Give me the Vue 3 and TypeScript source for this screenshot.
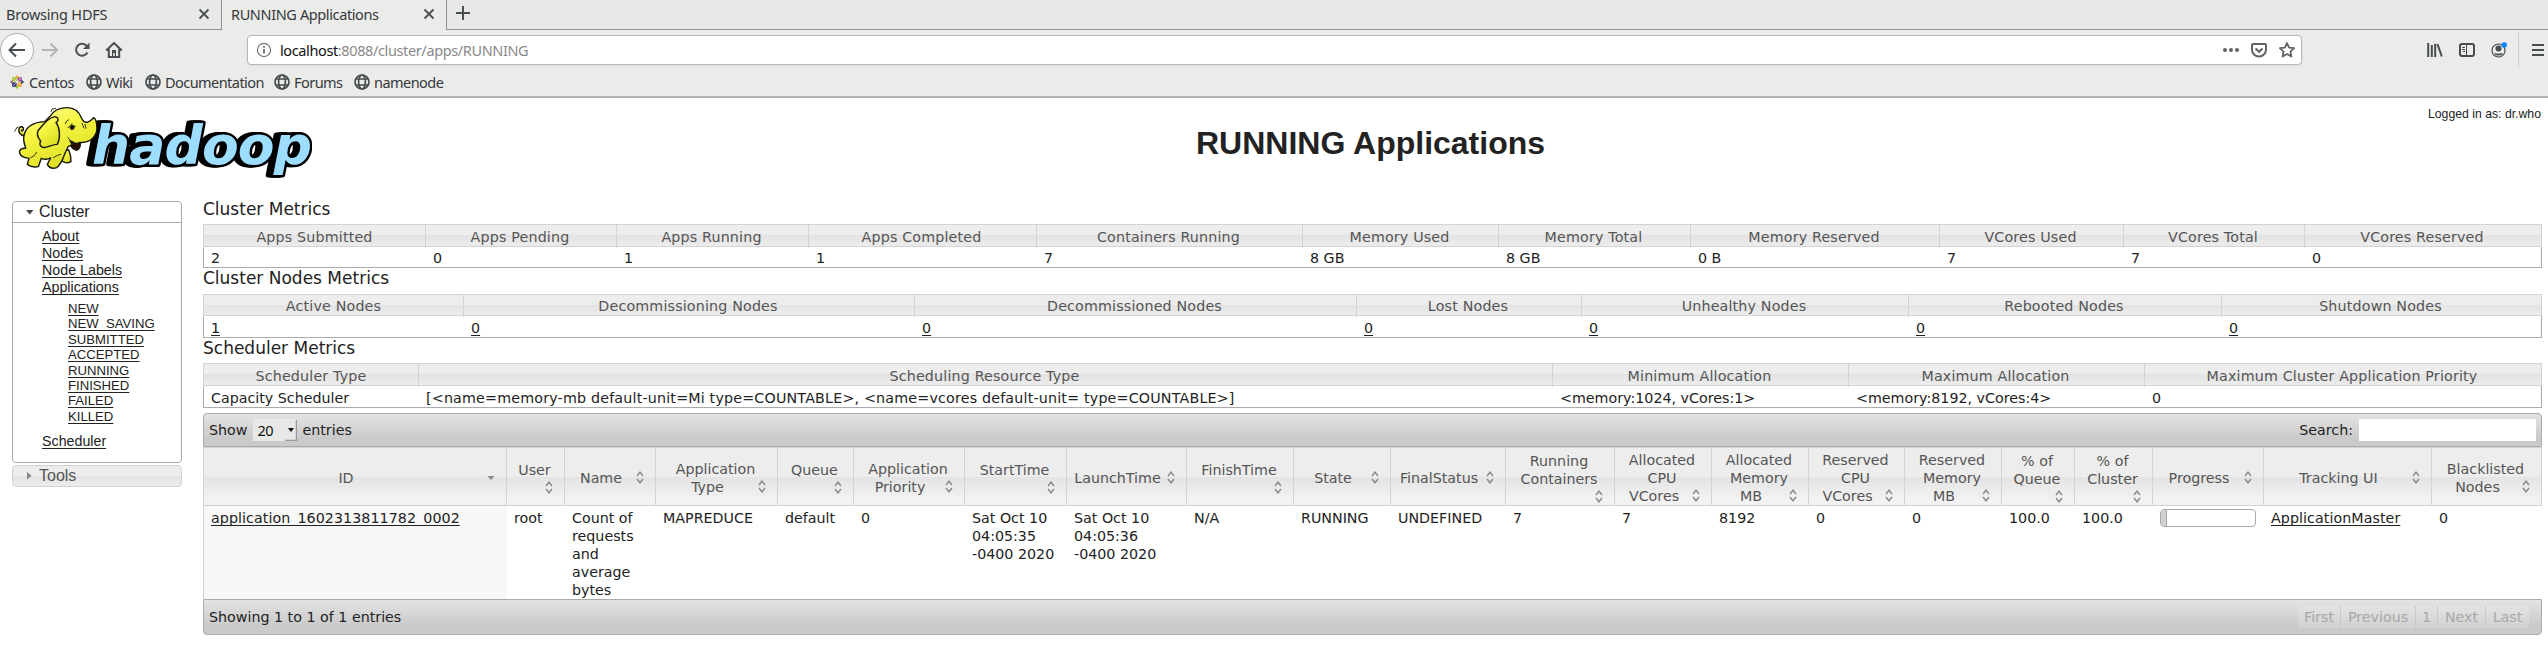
<script setup lang="ts">
interface Column { label: string; width: number; value: string; link?: boolean }
interface AppColumn { lines: string[]; width: number; value: string[]; kind?: 'link' | 'progress'; sorted?: boolean }

const bookmarks = [
  { name: 'Centos', width: 76 },
  { name: 'Wiki', width: 59 },
  { name: 'Documentation', width: 129 },
  { name: 'Forums', width: 80 },
  { name: 'namenode', width: 90 },
]

const links = ['About', 'Nodes', 'Node Labels', 'Applications']
const states = ['NEW', 'NEW_SAVING', 'SUBMITTED', 'ACCEPTED', 'RUNNING', 'FINISHED', 'FAILED', 'KILLED']

const metrics: { title: string; cls: string; columns: Column[] }[] = [
  {
    title: 'Cluster Metrics',
    cls: 'cluster',
    columns: [
      { label: 'Apps Submitted', width: 222, value: '2' },
      { label: 'Apps Pending', width: 191, value: '0' },
      { label: 'Apps Running', width: 192, value: '1' },
      { label: 'Apps Completed', width: 228, value: '1' },
      { label: 'Containers Running', width: 266, value: '7' },
      { label: 'Memory Used', width: 196, value: '8 GB' },
      { label: 'Memory Total', width: 192, value: '8 GB' },
      { label: 'Memory Reserved', width: 249, value: '0 B' },
      { label: 'VCores Used', width: 184, value: '7' },
      { label: 'VCores Total', width: 181, value: '7' },
      { label: 'VCores Reserved', width: 237, value: '0' },
    ],
  },
  {
    title: 'Cluster Nodes Metrics',
    cls: 'nodes',
    columns: [
      { label: 'Active Nodes', width: 260, value: '1', link: true },
      { label: 'Decommissioning Nodes', width: 451, value: '0', link: true },
      { label: 'Decommissioned Nodes', width: 442, value: '0', link: true },
      { label: 'Lost Nodes', width: 225, value: '0', link: true },
      { label: 'Unhealthy Nodes', width: 327, value: '0', link: true },
      { label: 'Rebooted Nodes', width: 313, value: '0', link: true },
      { label: 'Shutdown Nodes', width: 320, value: '0', link: true },
    ],
  },
  {
    title: 'Scheduler Metrics',
    cls: 'scheduler',
    columns: [
      { label: 'Scheduler Type', width: 215, value: 'Capacity Scheduler' },
      { label: 'Scheduling Resource Type', width: 1134, value: '[<name=memory-mb default-unit=Mi type=COUNTABLE>, <name=vcores default-unit= type=COUNTABLE>]' },
      { label: 'Minimum Allocation', width: 296, value: '<memory:1024, vCores:1>' },
      { label: 'Maximum Allocation', width: 296, value: '<memory:8192, vCores:4>' },
      { label: 'Maximum Cluster Application Priority', width: 397, value: '0' },
    ],
  },
]

const apps: AppColumn[] = [
  { lines: ['ID'], width: 303, value: ['application_1602313811782_0002'], kind: 'link', sorted: true },
  { lines: ['User', ''], width: 58, value: ['root'] },
  { lines: ['Name'], width: 91, value: ['Count of', 'requests', 'and', 'average', 'bytes'] },
  { lines: ['Application', 'Type'], width: 122, value: ['MAPREDUCE'] },
  { lines: ['Queue', ''], width: 76, value: ['default'] },
  { lines: ['Application', 'Priority'], width: 111, value: ['0'] },
  { lines: ['StartTime', ''], width: 102, value: ['Sat Oct 10', '04:05:35', '-0400 2020'] },
  { lines: ['LaunchTime'], width: 120, value: ['Sat Oct 10', '04:05:36', '-0400 2020'] },
  { lines: ['FinishTime', ''], width: 107, value: ['N/A'] },
  { lines: ['State'], width: 97, value: ['RUNNING'] },
  { lines: ['FinalStatus'], width: 115, value: ['UNDEFINED'] },
  { lines: ['Running', 'Containers', ''], width: 109, value: ['7'] },
  { lines: ['Allocated', 'CPU', 'VCores'], width: 97, value: ['7'] },
  { lines: ['Allocated', 'Memory', 'MB'], width: 97, value: ['8192'] },
  { lines: ['Reserved', 'CPU', 'VCores'], width: 96, value: ['0'] },
  { lines: ['Reserved', 'Memory', 'MB'], width: 97, value: ['0'] },
  { lines: ['% of', 'Queue', ''], width: 73, value: ['100.0'] },
  { lines: ['% of', 'Cluster', ''], width: 78, value: ['100.0'] },
  { lines: ['Progress'], width: 111, value: [], kind: 'progress' },
  { lines: ['Tracking UI'], width: 168, value: ['ApplicationMaster'], kind: 'link' },
  { lines: ['Blacklisted', 'Nodes'], width: 110, value: ['0'] },
]

const pages = [
  { t: 'First', w: 43 },
  { t: 'Previous', w: 75 },
  { t: '1', w: 22 },
  { t: 'Next', w: 48 },
  { t: 'Last', w: 43 },
]

const tracks = (cols: { width: number }[]) => cols.map((c) => c.width + 'px').join(' ')
</script>

<template>
  <div class="window">
    <div class="tabs">
      <div class="tab">
        <span class="ui-text">Browsing HDFS</span>
        <svg width="12" height="12" viewBox="0 0 12 12"><path d="M1.500 1.500l9 9M10.500 1.500l-9 9" /></svg>
      </div>
      <div class="tab active">
        <span class="ui-text">RUNNING Applications</span>
        <svg width="12" height="12" viewBox="0 0 12 12"><path d="M1.500 1.500l9 9M10.500 1.500l-9 9" /></svg>
      </div>
      <div class="tab-rest">
        <svg width="14" height="14" viewBox="0 0 14 14"><path d="M7 0v14M0 7h14" /></svg>
      </div>
    </div>

    <div class="nav">
      <div class="back">
        <svg width="18" height="16" viewBox="0 0 18 16"><path d="M17 8H2M8 1.500L1.500 8L8 14.500" /></svg>
      </div>
      <svg class="fwd" width="16" height="16" viewBox="0 0 16 16"><path d="M0 8h14.500M8.500 1.500L15 8l-6.500 6.500" /></svg>
      <svg class="reload" width="16" height="16" viewBox="0 0 16 16"><path d="M13 4.300A6 6 0 1 0 13.400 10.500" /><path class="solid" d="M15.500 0.500v6.500h-6.500z" /></svg>
      <svg class="home" width="18" height="16" viewBox="0 0 18 16"><path d="M1.200 8.400L9 1L16.800 8.400M3.800 7v8h10.400V7" /><path class="solid" d="M7 8h4v7h-1.200v-4h-1.600v4H7z" /></svg>
      <div class="url">
        <svg class="info" width="16" height="16" viewBox="0 0 16 16"><circle cx="8" cy="8" r="6.600" /><path class="mark" d="M8 7v4.500M8 4v1.800" /></svg>
        <span class="ui-text address"><b>localhost</b>:8088/cluster/apps/RUNNING</span>
        <div class="url-actions">
          <svg width="16" height="16" viewBox="0 0 16 16"><g class="fill"><circle cx="2" cy="8" r="2" /><circle cx="8" cy="8" r="2" /><circle cx="14" cy="8" r="2" /></g></svg>
          <svg width="16" height="16" viewBox="0 0 16 16"><path d="M2 2h12a1 1 0 0 1 1 1v4.500a7 7 0 0 1-14 0V3a1 1 0 0 1 1-1z" /><path d="M4.500 6.500L8 9.800l3.500-3.300" /></svg>
          <svg width="16" height="16" viewBox="0 0 16 16"><path class="star" d="M8 1l2.100 4.600 5 .6-3.700 3.400 1 4.900L8 12l-4.400 2.500 1-4.900L.9 6.200l5-.6z" /></svg>
        </div>
      </div>
      <div class="tools">
        <svg width="16" height="16" viewBox="0 0 16 16"><path d="M1.200 1v14M4.800 3v12M8.200 1.800v13.200" /><path d="M10.500 2.200l4.300 12.300" /></svg>
        <svg width="16" height="16" viewBox="0 0 16 16"><rect x="1" y="2" width="14" height="12" rx="2" /><path class="thin" d="M7.500 2v12M3 5.500h3M3 7.500h3M4 9.500h2" /></svg>
        <svg class="account" width="16" height="16" viewBox="0 0 16 16"><circle class="ring" cx="7.500" cy="8.500" r="6.500" /><circle class="solid" cx="7.500" cy="6.500" r="3" /><path class="solid" d="M3.500 11q4 1.500 8 0v1.200q-4 2.600-8 0z" /><circle class="dot" cx="13.200" cy="3" r="2.700" /></svg>
      </div>
      <svg class="menu" width="14" height="14" viewBox="0 0 14 14"><path d="M1 2h12M1 7h12M1 12h12" /></svg>
    </div>

    <div class="bookmarks">
      <div v-for="(b, i) in bookmarks" :key="b.name" class="bookmark" :style="{ width: b.width + 'px' }">
        <svg v-if="i === 0" class="centos" width="16" height="16" viewBox="0 0 16 16">
          <path fill="#9ccd2a" d="M2.500 2.500h5v5h-5z" /><path fill="#a14f8c" d="M8.500 2.500h5v5h-5z" /><path fill="#262577" d="M2.500 8.500h5v5h-5z" /><path fill="#efa724" d="M8.500 8.500h5v5h-5z" />
          <path fill="#efa724" d="M8 0l2.500 3h-5z" /><path fill="#262577" d="M16 8l-3 2.500v-5z" /><path fill="#9ccd2a" d="M8 16l-2.500-3h5z" /><path fill="#a14f8c" d="M0 8l3-2.500v5z" />
          <path stroke="#f4f0e6" stroke-width=".8" d="M3.500 3.500l9 9M12.500 3.500l-9 9" />
        </svg>
        <svg v-else class="globe" width="16" height="16" viewBox="0 0 16 16"><circle cx="8" cy="8" r="7" /><ellipse cx="8" cy="8" rx="3.400" ry="7" /><path d="M1.800 5h12.400M1.800 11h12.400" /></svg>
        <span class="ui-text">{{ b.name }}</span>
      </div>
    </div>

    <div class="page">
      <header class="head">
        <svg class="logo" width="312" height="80" viewBox="0 98 312 80">
          <defs>
            <linearGradient id="skin" x1="0" y1="0" x2=".5" y2="1"><stop offset="0" stop-color="#fbfb9a" /><stop offset=".45" stop-color="#f6f643" /><stop offset="1" stop-color="#dede26" /></linearGradient>
          </defs>
          <text class="word" x="92" y="163.500" textLength="220">hadoop</text>
          <g class="elephant" transform="translate(0 95) scale(.3333)">
            <path d="M78 122C62 124 54 112 57 101C61 92 72 94 70 104C69 109 65 109 64 105" />
            <path class="whisk" d="M44 109l6-10M50 99l5-3M153 50l4-9M159 42l8-2" />
            <path d="M178 172L186 198Q200 208 213 200Q214 184 206 164Z" />
            <path d="M134 80C98 82 74 98 71 128C70 145 76 152 77 160Q62 158 58 170Q60 188 87 190L82 208Q96 219 115 215L124 190Q138 196 152 189L142 208Q150 224 170 218Q184 206 192 182L204 155L217 150Q226 160 238 142C268 146 296 126 290 88Q288 72 281 68Q275 76 262 82Q251 84 245 70C237 48 220 37 198 38C176 39 160 48 150 64Z" />
            <path d="M165 65C140 70 130 90 114 107C108 122 116 130 122 138C116 150 124 160 136 157C150 154 160 148 172 148C182 128 180 98 168 82Q178 78 172 68Z" />
            <path class="mouth" d="M210 138Q224 148 241 144Q242 160 230 166Q216 162 213 152Q218 146 210 138Z" />
            <path class="crease" d="M196 86q2-10 10-12M204 98q8-12 22-4M214 92l2-6M246 85l6 14M255 88l3 12M262 84l-3-4M204 128q4 10 18 14M92 188q14-4 18-16M160 188q12-8 22-10" />
            <path class="eye" d="M208 98Q214 88 224 94Q224 106 214 105Z" />
          </g>
        </svg>
        <h1>RUNNING Applications</h1>
        <div class="login">Logged in as: dr.who</div>
      </header>

      <div class="columns">
        <aside>
          <div class="panel">
            <div class="panel-head"><svg width="8" height="5" viewBox="0 0 8 5"><path d="M0 0h7.500L3.750 4.500z" /></svg>Cluster</div>
            <ul class="links"><li v-for="l in links" :key="l"><a>{{ l }}</a></li></ul>
            <ul class="states"><li v-for="s in states" :key="s"><a>{{ s }}</a></li></ul>
            <div class="scheduler-link"><a>Scheduler</a></div>
          </div>
          <div class="panel-closed"><svg width="5" height="8" viewBox="0 0 5 8"><path d="M0 0v7.500L4.500 3.750z" /></svg>Tools</div>
        </aside>

        <main>
          <section v-for="m in metrics" :key="m.title" :class="m.cls">
            <h3>{{ m.title }}</h3>
            <div class="grid heads" :style="{ gridTemplateColumns: tracks(m.columns) }">
              <div v-for="c in m.columns" :key="c.label">{{ c.label }}</div>
            </div>
            <div class="grid cells" :style="{ gridTemplateColumns: tracks(m.columns) }">
              <div v-for="c in m.columns" :key="c.label" :class="{ resource: c.value.length > 40 }"><a v-if="c.link">{{ c.value }}</a><template v-else>{{ c.value }}</template></div>
            </div>
          </section>

          <div class="bar top">
            <span class="show">Show</span>
            <span class="select"><span class="ui-text">20</span><svg width="12" height="22" viewBox="0 0 12 22"><path d="M3 9h6l-3 4z" /><path class="shade" d="M0 21.500h11.500V1" /></svg></span>
            <span>entries</span>
            <span class="search">Search:</span><span class="field"></span>
          </div>
          <div class="grid app-heads" :style="{ gridTemplateColumns: tracks(apps) }">
            <div v-for="(c, ci) in apps" :key="ci" :class="{ alone: c.lines[c.lines.length - 1] === '' }">
              <div v-for="(l, i) in c.lines" :key="i" class="line" :class="{ tail: i === c.lines.length - 1 }">
                <span>{{ l }}</span>
                <svg v-if="i === c.lines.length - 1" width="16" height="16" viewBox="0 0 16 16">
                  <path v-if="c.sorted" class="solid" d="M4.500 6h7l-3.500 4z" />
                  <path v-else d="M5 6l3-3.800L11 6M5 9l3 3.800L11 9" />
                </svg>
              </div>
            </div>
          </div>
          <div class="grid app-cells" :style="{ gridTemplateColumns: tracks(apps) }">
            <div v-for="(c, ci) in apps" :key="ci" :class="{ sorted: c.sorted }">
              <div v-if="c.kind === 'progress'" class="progress"><i></i></div>
              <template v-for="v in c.value" v-else :key="v">
                <a v-if="c.kind === 'link'">{{ v }}</a>
                <div v-else>{{ v }}</div>
              </template>
            </div>
          </div>
          <div class="bar bottom">
            <span>Showing 1 to 1 of 1 entries</span>
            <div class="pages"><span v-for="p in pages" :key="p.t" :style="{ width: p.w + 'px' }">{{ p.t }}</span></div>
          </div>
        </main>
      </div>
    </div>
  </div>
</template>

<style>
body { margin: 0; background: #fff; }
</style>

<style scoped>
* { box-sizing: border-box; }
.window { width: 2548px; height: 648px; overflow: hidden; color: #222; font: 14.25px/18px "DejaVu Sans", sans-serif; }
svg { display: block; flex: none; fill: none; }
.ui-text { font: 14.5px/20px "Noto Sans", sans-serif; letter-spacing: -0.38px; color: #35393b; white-space: nowrap; }

.tabs { display: flex; height: 30px; background: #e8e8e7; }
.tab { display: flex; align-items: center; justify-content: space-between; width: 222px; padding: 0 11px 2px 6px; border-right: 1px solid #8e918f; border-bottom: 1px solid #8e918f; }
.tab:not(.active) .ui-text { letter-spacing: -0.22px; }
.tab.active { width: 225px; padding: 0 11px 3px 9px; border-bottom: 0; background: #ebebea; }
.tab svg path { stroke: #4a4f50; stroke-width: 1.8; }
.tab-rest { flex: 1; padding: 6px 0 0 9px; border-bottom: 1px solid #8e918f; }
.tab-rest path { stroke: #4a4f50; stroke-width: 2; }

.nav { display: flex; align-items: center; height: 40px; background: #ebebea; }
.nav svg path, .nav rect { stroke: #474d51; stroke-width: 2; }
.nav svg .solid { fill: #474d51; stroke: none; }
.back { display: flex; align-items: center; justify-content: center; width: 34px; height: 34px; border: 1px solid #b0b0ae; border-radius: 50%; background: #fdfdfd; }
.nav .fwd { margin-left: 8px; }
.nav .fwd path { stroke: #b3b5b5; }
.reload { margin-left: 16px; }
.home { margin-left: 15px; }
.url { display: flex; align-items: center; width: 2055px; height: 30px; margin-left: 124px; padding: 0 6px 0 8px; border: 1px solid #b7b7b5; border-radius: 4px; background: #fff; box-shadow: 0 1px 3px #0001; }
.info circle { stroke: #737373; stroke-width: 1.2; }
.nav .info .mark { stroke: #666; stroke-width: 1.8; }
.address { margin-left: 8px; color: #8a8a8a; }
.address b { font-weight: 400; color: #111; }
.url-actions { display: flex; gap: 12px; margin-left: auto; }
.nav .url-actions path { stroke: #626262; }
.nav .url-actions .star { stroke-width: 1.8; stroke-linejoin: round; }
.fill { fill: #626262; }
.tools { display: flex; align-items: center; width: 217px; height: 34px; gap: 16px; padding-left: 125px; border-right: 1px solid #ccc; }
.nav .thin { stroke-width: 1; }
.ring { stroke: #474d51; stroke-width: 1.2; }
.dot { fill: #0a84ff; }
.menu { margin-left: 12px; }

.bookmarks { display: flex; height: 28px; padding: 4px 0 0 10px; background: #ebebea; border-bottom: 2px solid #b0b1af; }
.bookmark { display: flex; align-items: center; gap: 4px; height: 16px; }
.bookmark .ui-text { letter-spacing: -0.55px; }
.bookmark:first-child .ui-text { letter-spacing: -0.35px; }
.bookmark .centos { width: 14px; height: 14px; margin-right: 1px; }
.globe circle, .globe ellipse, .globe path { stroke: #474d51; stroke-width: 1.7; }

.page { background: #fff; }
.head { display: grid; grid-template-columns: 312px 1fr 300px; height: 101px; }
.head h1 { margin: 26px 0 0 182px; justify-self: center; width: 350px; font: bold 32px/38px "Liberation Sans", Arial, sans-serif; white-space: nowrap; }
.login { padding: 9px 7px 0 0; text-align: right; font: 12.25px/15px "Liberation Sans", Arial, sans-serif; }
.logo .word { font: italic bold 53.5px "DejaVu Sans", sans-serif; fill: #9dddff; stroke: #000; stroke-width: 5; paint-order: stroke; stroke-linejoin: round; filter: drop-shadow(-3px 0 0 #000) drop-shadow(-2px 0 0 #000); }
.elephant path { fill: url(#skin); stroke: #16160a; stroke-width: 4.2; stroke-linejoin: round; stroke-linecap: round; }
.elephant .whisk, .elephant .crease { fill: none; stroke-width: 2.5; }
.elephant .eye { fill: #111; stroke: none; }
.elephant .mouth { fill: #2a0d05; }

.columns { display: flex; align-items: flex-start; }
aside { width: 170px; margin: 2px 21px 0 12px; font-family: "Liberation Sans", Arial, sans-serif; }
aside ul { margin: 0; padding: 0; list-style: none; }
a { color: #222; text-decoration: underline; text-underline-offset: 2px; text-decoration-thickness: 1px; text-decoration-skip-ink: none; }
.panel { height: 262px; border: 1px solid #aaa; border-radius: 4px; }
.panel-head { display: flex; align-items: center; height: 21px; padding-left: 13px; gap: 5px; border-bottom: 1px solid #aaa; font-size: 16px; }
.panel-head path { fill: #454545; }
aside .links { padding: 5px 0 0 29px; font-size: 14.25px; line-height: 17px; }
aside .states { padding: 5px 0 0 55px; font-size: 13.15px; line-height: 15.4px; }
.scheduler-link { padding: 9px 0 0 29px; font-size: 14.25px; line-height: 17px; }
.panel-closed { display: flex; align-items: center; height: 22px; margin-top: 2px; padding-left: 14px; gap: 7px; border: 1px solid #d3d3d3; border-radius: 4px; background: linear-gradient(#ededed 50%, #e3e3e3 50%, #ececec); color: #555; font-size: 16px; }
.panel-closed path { fill: #888; }

main { width: 2339px; }
h3 { margin: 0; font-size: 17px; font-weight: 400; line-height: 20px; }
.grid { display: grid; white-space: nowrap; }
.heads { color: #555; text-align: center; border: solid #d3d3d3; border-width: 1px 1px 1px 0; background: linear-gradient(#ededed 50%, #e3e3e3 50%, #ececec); letter-spacing: 0.17px; }
.heads > div { border-left: 1px solid #d3d3d3; line-height: 21px; padding-top: 2px; }
.heads > div:not(:first-child) { padding-right: 2px; }
.cells { border: 1px solid #aaa; border-top: 0; }
.cells > div { padding-left: 7px; line-height: 18px; }
.cells .resource { letter-spacing: 0.19px; }
.cluster { height: 69px; }
.cluster h3 { height: 25px; }
.cluster .heads { height: 23px; }
.cluster .cells { height: 21px; padding-top: 2px; }
.nodes { height: 70px; }
.nodes h3 { height: 26px; }
.nodes .heads { height: 22px; }
.nodes .heads > div { padding-top: 1px; }
.nodes .cells { height: 22px; padding-top: 3px; }
.scheduler { height: 75px; }
.scheduler h3 { height: 25px; }
.scheduler .heads { height: 23px; }
.scheduler .cells { height: 22px; padding-top: 3px; }

.bar { display: flex; align-items: center; border: 1px solid #aaa; background: linear-gradient(#e3e3e3, #cacaca 75%); }
.top { height: 34px; padding: 0 5px; border-radius: 4px 4px 0 0; }
.select { display: flex; align-items: center; justify-content: space-between; width: 44px; height: 22px; margin: 0 5px 0 6px; padding-left: 4px; background: #e8e8e6; }
.select .ui-text { color: #111; }
.select path { fill: #111; }
.select .shade { fill: none; stroke: #999; stroke-width: 1.5; }
.search { margin-left: auto; }
.field { width: 177px; height: 22px; margin-left: 6px; background: #fff; }

.app-heads { height: 59px; color: #555; border: solid #d3d3d3; border-width: 1px 1px 1px 0; background: linear-gradient(#ededed 50%, #e3e3e3 50%, #f2f2f2 90%); }
.app-heads > div { display: flex; flex-direction: column; justify-content: center; border-left: 1px solid #d3d3d3; padding: 3px 7px 0 5px; }
.line { display: flex; justify-content: center; height: 18px; }
.tail span { flex: 1; text-align: center; }
.tail svg { margin-top: 1px; }
.alone .tail { height: 16px; }
.line path { stroke: #888; stroke-width: 1.4; }
.line .solid { fill: #888; stroke: none; }
.app-cells { height: 93px; border: solid #d3d3d3; border-width: 0 0 0 1px; }
.app-cells > div { padding: 3px 0 0 7px; }
.app-cells .sorted { background: #f7f7f7; }
.app-cells a { letter-spacing: 0.06px; }
.progress { width: 96px; height: 18px; border: 1px solid #aaa; border-radius: 4px; overflow: hidden; }
.progress i { display: block; width: 6px; height: 100%; background: #d0d0d0; border-right: 1px solid #aaa; }
.bottom { height: 36px; padding: 0 12px 0 5px; border-radius: 0 0 4px 4px; }
.pages { display: flex; height: 22px; margin-left: auto; border-radius: 4px; background: #ffffff2e; color: #a8a8a8; }
.pages span { text-align: center; line-height: 22px; border-right: 1px solid #c9c9c9; }
.pages span:last-child { border: 0; }
</style>
